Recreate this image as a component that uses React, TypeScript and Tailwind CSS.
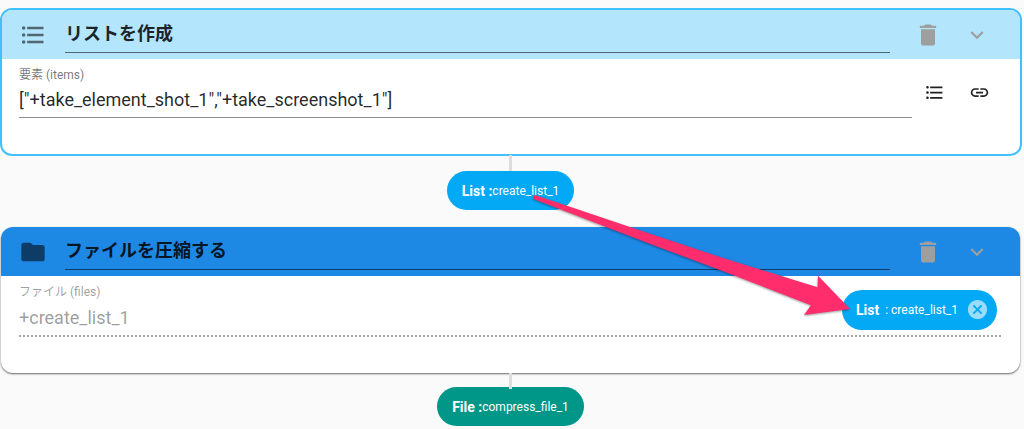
import type { ReactNode } from 'react';
import {
  MdCancel,
  MdDelete,
  MdExpandMore,
  MdFolder,
  MdFormatListBulleted,
  MdLink,
} from 'react-icons/md';

// TYPES
type StepHeaderProps = {
  icon: ReactNode;
  title: string;
  className: string;
};

type OutputChipProps = {
  type: string;
  name: string;
  className: string;
};

// MARKUP
const StepHeader = ({ icon, title, className }: StepHeaderProps) => (
  <header className={`flex h-[49px] items-center pr-[30px] ${className}`}>
    <span className="w-[46px] shrink-0 text-black/55">{icon}</span>
    <input
      type="text"
      aria-label="タイトル"
      defaultValue={title}
      className="h-9 min-w-0 flex-1 border-b border-black/55 bg-transparent pb-1 text-lg font-bold text-black/85 outline-none"
    />
    <button
      type="button"
      aria-label="削除"
      className="ml-6 shrink-0 text-[#9e9e9e]"
    >
      <MdDelete size={28} />
    </button>
    <button
      type="button"
      aria-label="開閉"
      className="ml-[22px] shrink-0 text-[#9e9e9e]"
    >
      <MdExpandMore size={26} />
    </button>
  </header>
);

const Connector = () => (
  <div className="relative z-10 h-4 w-[3px] bg-[#dcdcdc]" />
);

const OutputChip = ({ type, name, className }: OutputChipProps) => (
  <div
    className={`flex h-[39px] items-center rounded-full px-[15px] text-white ${className}`}
  >
    <span className="text-sm font-bold whitespace-pre">{type} :</span>
    <span className="text-xs">{name}</span>
  </div>
);

const Arrow = () => (
  <svg
    viewBox="512 190 350 135"
    className="pointer-events-none absolute top-[190px] left-1/2 z-20 h-[135px] w-[350px] drop-shadow-[0_1px_1px_rgba(0,0,0,0.4)]"
    aria-hidden="true"
  >
    <path
      d="M535 195 L633 228 L720 257 L817.5 287.3 L818 275.7 L850 309 L804 315 L811 305.3 L720 270 L653 245 L534 199.3 Q532 196 535 195Z"
      fill="#ff2d6b"
    />
  </svg>
);

export default function App() {
  return (
    <main className="relative min-h-screen overflow-hidden bg-[#fafafa] pt-2 font-[Roboto,'Noto_Sans_CJK_JP',sans-serif]">
      <section className="mr-0.5 overflow-hidden rounded-xl border-2 border-[#40c0ff] bg-white">
        <StepHeader
          icon={<MdFormatListBulleted size={28} />}
          title="リストを作成"
          className="bg-[#b3e5fc] pl-[17px]"
        />
        <div className="flex h-[95px] items-start pt-2 pr-[30px] pl-[17px]">
          <div className="flex-1">
            <label
              htmlFor="items"
              className="block text-xs leading-4 text-black/55"
            >
              要素 (items)
            </label>
            <input
              id="items"
              type="text"
              defaultValue={'["+take_element_shot_1","+take_screenshot_1"]'}
              className="block h-[35px] w-full border-b border-[#8e8e8e] pb-0.5 text-lg text-black/85 outline-none"
            />
          </div>
          <div className="mt-[15px] flex gap-6 pl-3 text-[#222]">
            <button type="button" aria-label="リスト">
              <MdFormatListBulleted size={21} />
            </button>
            <button type="button" aria-label="リンク">
              <MdLink size={21} />
            </button>
          </div>
        </div>
      </section>

      <div className="-mt-px mr-[3px] flex flex-col items-center">
        <Connector />
        <OutputChip type="List" name="create_list_1" className="bg-[#03a9f4]" />
      </div>

      <section className="mt-[17px] mr-1 ml-px overflow-hidden rounded-xl bg-white shadow-[0_1px_2px_rgba(0,0,0,0.6)]">
        <StepHeader
          icon={<MdFolder size={28} />}
          title="ファイルを圧縮する"
          className="bg-[#1e88e5] pl-[18px]"
        />
        <div className="h-[97px] pt-2 pr-[19px] pl-[18px]">
          <div className="flex items-center border-b-2 border-dotted border-[#a8a8a8]">
            <div className="flex-1">
              <label
                htmlFor="files"
                className="block text-xs leading-4 text-black/40"
              >
                ファイル (files)
              </label>
              <input
                id="files"
                type="text"
                disabled
                defaultValue="+create_list_1"
                className="block h-[35px] w-full text-lg text-black/40 outline-none"
              />
            </div>
            <div className="mr-1 flex h-10 items-center rounded-full bg-[#03a9f4] pr-2 pl-3.5 text-white">
              <span className="text-sm font-bold">List</span>
              <span className="ml-1.5 text-xs">: create_list_1</span>
              <button
                type="button"
                aria-label="解除"
                className="ml-2 text-[#9adcfb]"
              >
                <MdCancel size={23} />
              </button>
            </div>
          </div>
        </div>
      </section>

      <div className="mr-[3px] flex flex-col items-center">
        <Connector />
        <OutputChip
          type="File"
          name="compress_file_1"
          className="-mt-0.5 bg-[#009688]"
        />
      </div>

      <Arrow />
    </main>
  );
}
